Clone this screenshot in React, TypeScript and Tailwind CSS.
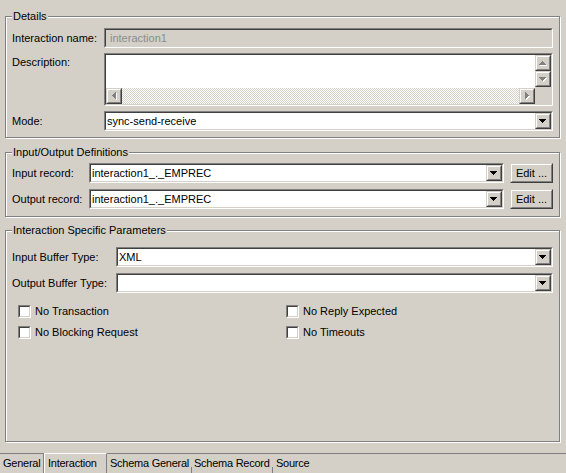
import type { ReactNode } from 'react';

type Dir = 'up' | 'down' | 'left' | 'right';

const ARROWS: Record<Dir, string> = {
  down: 'M0 0h7v1h-1v1h-1v1h-1v1h-1v-1h-1v-1h-1v-1h-1z',
  up: 'M3 0h1v1h1v1h1v1h1v1h-7v-1h1v-1h1v-1h1z',
  right: 'M0 0h1v1h1v1h1v1h1v1h-1v1h-1v1h-1v1h-1z',
  left: 'M3 0h1v7h-1v-1h-1v-1h-1v-1h-1v-1h1v-1h1v-1h1z',
};

function Arrow({ dir, disabled }: { dir: Dir; disabled?: boolean }) {
  const w = dir === 'left' || dir === 'right' ? 4 : 7;
  const h = w === 4 ? 7 : 4;
  return (
    <svg width={w + 1} height={h + 1} viewBox={`0 0 ${w + 1} ${h + 1}`} shapeRendering="crispEdges">
      {disabled && <path d={ARROWS[dir]} fill="#fff" transform="translate(1 1)" />}
      <path d={ARROWS[dir]} fill={disabled ? '#808080' : '#000'} />
    </svg>
  );
}

// 3D sunken edge (text fields, checkboxes)
function Sunken({ className = '', inner = '', children }: { className?: string; inner?: string; children?: ReactNode }) {
  return (
    <div className={`border border-t-[#808080] border-l-[#808080] border-r-white border-b-white ${className}`}>
      <div className={`h-full border border-t-[#404040] border-l-[#404040] border-r-[#d4d0c8] border-b-[#d4d0c8] ${inner}`}>
        {children}
      </div>
    </div>
  );
}

// 3D raised edge (buttons)
function Raised({ className = '', children }: { className?: string; children?: ReactNode }) {
  return (
    <div className={`shrink-0 border border-t-[#d4d0c8] border-l-[#d4d0c8] border-r-[#404040] border-b-[#404040] bg-[#d4d0c8] ${className}`}>
      <div className="flex h-full items-center justify-center border border-t-white border-l-white border-r-[#808080] border-b-[#808080]">
        {children}
      </div>
    </div>
  );
}

function Combo({ value = '', className = '' }: { value?: string; className?: string }) {
  return (
    <Sunken className={`h-[20px] ${className}`} inner="flex bg-white">
      <span className="flex-1 whitespace-nowrap pl-[1px] leading-[16px]">{value}</span>
      <Raised className="h-[16px] w-[16px]">
        <Arrow dir="down" />
      </Raised>
    </Sunken>
  );
}

function Group({ title, className = '', body = '', children }: { title: string; className?: string; body?: string; children: ReactNode }) {
  return (
    <fieldset className={`ml-[5px] w-[555px] border border-[#808080] shadow-[inset_1px_1px_0_#fff,1px_1px_0_#fff] ${className}`}>
      <legend className="ml-[6px] bg-[#d4d0c8] px-[1px] leading-[13px]">{title}</legend>
      <div className={`px-[6px] ${body}`}>{children}</div>
    </fieldset>
  );
}

function Check({ label }: { label: string }) {
  return (
    <div className="flex items-center gap-[4px] leading-[13px]">
      <Sunken className="h-[13px] w-[13px]" inner="bg-white" />
      <span>{label}</span>
    </div>
  );
}

export default function App() {
  return (
    <div className="flex h-[473px] w-[566px] flex-col overflow-hidden bg-[#d4d0c8] pt-[10px] text-[11px] text-black [font-family:'Liberation_Sans',Arial,sans-serif]">
      {/* Details */}
      <Group title="Details" body="flex flex-col gap-[5px] pt-[5px] pb-[6px]">
        <div className="flex items-center">
          <span className="w-[92px] shrink-0">Interaction name:</span>
          <Sunken className="h-[20px] flex-1" inner="bg-[#d4d0c8] pl-[4px] leading-[16px] text-[#8c8c8c]">
            interaction1
          </Sunken>
        </div>
        <div className="flex">
          <span className="w-[92px] shrink-0 pt-[1px]">Description:</span>
          <Sunken className="h-[53px] flex-1" inner="flex flex-col bg-white">
            <div className="flex flex-1">
              <div className="flex-1" />
              <div className="flex w-[16px] flex-col bg-[#d4d0c8]">
                <Raised className="h-[16px] w-[16px]">
                  <Arrow dir="up" disabled />
                </Raised>
                <Raised className="h-[16px] w-[16px]">
                  <Arrow dir="down" disabled />
                </Raised>
              </div>
            </div>
            <div className="flex h-[16px]">
              <Raised className="h-[16px] w-[16px]">
                <Arrow dir="left" disabled />
              </Raised>
              <div className="flex-1 bg-[image:repeating-conic-gradient(#fff_0_25%,#d4d0c8_0_50%)] bg-[length:2px_2px]" />
              <Raised className="h-[16px] w-[16px]">
                <Arrow dir="right" disabled />
              </Raised>
              <div className="w-[16px] bg-[#d4d0c8]" />
            </div>
          </Sunken>
        </div>
        <div className="flex items-center">
          <span className="w-[92px] shrink-0">Mode:</span>
          <Combo value="sync-send-receive" className="flex-1" />
        </div>
      </Group>

      {/* Input/Output Definitions */}
      <Group title="Input/Output Definitions" className="mt-[8px]" body="flex flex-col gap-[6px] pt-[4px] pb-[7px]">
        {['Input record:', 'Output record:'].map((label) => (
          <div key={label} className="flex items-center">
            <span className="w-[77px] shrink-0">{label}</span>
            <Combo value="interaction1_._EMPREC" className="flex-1" />
            <Raised className="ml-[6px] h-[20px] w-[43px]">
              <span className="leading-[13px]">Edit ...</span>
            </Raised>
          </div>
        ))}
      </Group>

      {/* Interaction Specific Parameters */}
      <Group title="Interaction Specific Parameters" className="mt-[7px] flex-1" body="pt-[10px]">
        <div className="flex flex-col gap-[6px]">
          <div className="flex items-center">
            <span className="w-[104px] shrink-0">Input Buffer Type:</span>
            <Combo value="XML" className="flex-1" />
          </div>
          <div className="flex items-center">
            <span className="w-[104px] shrink-0">Output Buffer Type:</span>
            <Combo className="flex-1" />
          </div>
        </div>
        <div className="mt-[12px] grid grid-cols-[268px_1fr] gap-y-[8px] pl-[6px]">
          <Check label="No Transaction" />
          <Check label="No Reply Expected" />
          <Check label="No Blocking Request" />
          <Check label="No Timeouts" />
        </div>
      </Group>

      {/* Editor tabs */}
      <div className="mt-[11px] flex h-[20px] shrink-0 whitespace-nowrap border-t border-[#808080] leading-[19px] tracking-[-0.25px]">
        <span className="w-[43px] pl-[3px]">General</span>
        <div className="border-l border-[#808080]">
          <span className="-mt-px block h-[20px] w-[63px] border-t border-l border-r border-t-white border-l-white border-r-[#808080] pl-[3px] leading-[18px]">
            Interaction
          </span>
        </div>
        <span className="w-[84px] pl-[3px]">Schema General</span>
        <span className="h-[6px] w-px shrink-0 self-end bg-[#808080]" />
        <span className="w-[80px] pl-[2px]">Schema Record</span>
        <span className="h-[6px] w-px shrink-0 self-end bg-[#808080]" />
        <span className="pl-[3px]">Source</span>
      </div>
    </div>
  );
}
